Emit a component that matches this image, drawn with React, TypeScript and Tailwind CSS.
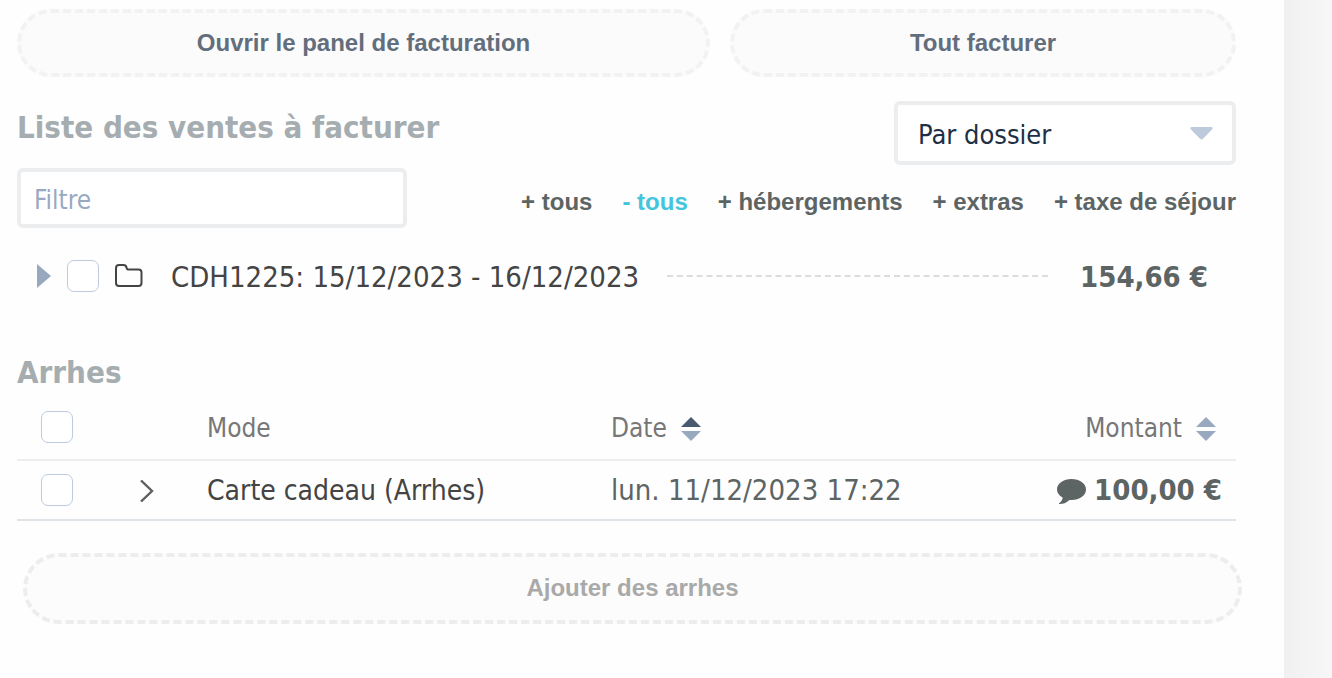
import { useState } from "react";

const tahoma = "font-['Tahoma','DejaVu_Sans_Condensed','Noto_Sans',sans-serif]";
const checkbox =
  "block size-8 shrink-0 appearance-none rounded-[7px] border border-[#bccbde] bg-white checked:bg-[#45c4dd]";
const dashed = "rounded-full border-4 border-dashed px-6 text-2xl font-bold font-['Liberation_Sans',Arial,sans-serif]";

type SortProps = { active?: boolean };

function SortIcon({ active }: SortProps) {
  return (
    <svg width="20" height="24" viewBox="0 0 20 24" aria-hidden="true">
      <path d="M10 0 20 10H0Z" fill={active ? "#475a6e" : "#98a9bf"} />
      <path d="M0 14H20L10 24Z" fill="#98a9bf" />
    </svg>
  );
}

const filters = ["+ tous", "- tous", "+ hébergements", "+ extras", "+ taxe de séjour"];

export default function App() {
  const [selected, setSelected] = useState("- tous");

  return (
    <div className={`flex min-h-screen bg-[#fefefe] ${tahoma}`}>
      <main className="min-w-0 flex-1 pt-[9px] pr-12 pb-[54px] pl-[17px]">
        <div className="flex gap-5">
          <button className={`${dashed} h-[68px] flex-auto border-[#f2f2f2] bg-[#fbfbfb] text-[#626e7b]`}>
            Ouvrir le panel de facturation
          </button>
          <button className={`${dashed} h-[68px] flex-auto border-[#f2f2f2] bg-[#fbfbfb] text-[#626e7b]`}>
            Tout facturer
          </button>
        </div>

        <div className="mt-6 flex items-start justify-between">
          <h2 className="pt-1 text-[31px] leading-[44px] font-bold text-[#a5adb0]">Liste des ventes à facturer</h2>
          <div className="relative w-[342px]">
            <select
              aria-label="Regroupement"
              className="h-16 w-full appearance-none rounded-md border-4 border-[#ebedef] bg-white px-5 pt-1 text-[27px] text-[#212f45]"
            >
              <option>Par dossier</option>
            </select>
            <svg
              className="pointer-events-none absolute top-[26px] right-[23px]"
              width="23"
              height="13"
              viewBox="0 0 23 13"
              aria-hidden="true"
            >
              <path d="M1.5 0H21.5Q23.5 .5 22 2.5L13 11.8Q11.5 13 10 11.8L1 2.5Q-.5 .5 1.5 0Z" fill="#bccadb" />
            </svg>
          </div>
        </div>

        <div className="mt-[3px] flex items-center justify-between">
          <input
            aria-label="Filtre"
            placeholder="Filtre"
            className="h-[60px] w-[390px] rounded-md border-4 border-[#ebedef] bg-white px-[13px] pt-1 text-[26px] text-[#212f45] placeholder:text-[#98a9c2]"
          />
          <div className="flex gap-[30px] pt-2 font-['Liberation_Sans',Arial,sans-serif] text-2xl font-bold">
            {filters.map((label) => (
              <button
                key={label}
                onClick={() => setSelected(label)}
                className={label === selected ? "text-[#45c4dd]" : "text-[#5c6464]"}
              >
                {label}
              </button>
            ))}
          </div>
        </div>

        <div className="mt-7 flex h-10 items-center pr-7 pl-5">
          <button aria-label="Déplier">
            <svg width="14" height="24" viewBox="0 0 14 24" aria-hidden="true">
              <path d="M0 0 14 12 0 24Z" fill="#98a9bf" />
            </svg>
          </button>
          <input id="dossier" type="checkbox" className={`${checkbox} ml-4`} />
          <svg
            className="ml-4 shrink-0"
            width="28"
            height="24"
            viewBox="1 0 28 24"
            fill="none"
            stroke="#444"
            strokeWidth="2"
            aria-hidden="true"
          >
            <path d="M2 4Q2 1 5 1H9.5Q12 1 12.5 3.5T15 5.5H24.5Q27.5 5.5 27.5 8.5V19Q27.5 22 24.5 22H5Q2 22 2 19Z" />
          </svg>
          <label htmlFor="dossier" className="ml-7 pt-[3px] text-[29px] whitespace-nowrap text-[#444]">
            CDH1225: 15/12/2023 - 16/12/2023
          </label>
          <div className="mr-8 ml-7 flex-1 border-t-2 border-dashed border-[#dcdcdc]" />
          <span className="pt-[3px] text-[29px] font-bold whitespace-nowrap text-[#5c6464]">154,66 €</span>
        </div>

        <h2 className="mt-[54px] text-[31px] leading-[44px] font-bold text-[#a5adb0]">Arrhes</h2>
        <table className="w-full table-fixed text-left">
          <colgroup>
            <col className="w-[122px]" />
            <col className="w-[68px]" />
            <col className="w-[404px]" />
            <col />
            <col className="w-[240px]" />
          </colgroup>
          <thead>
            <tr className="h-[66px] border-b-2 border-[#ededee] text-[26px] text-[#777]">
              <th className="pl-6">
                <input aria-label="Tout sélectionner" type="checkbox" className={checkbox} />
              </th>
              <th />
              <th className="pt-1 font-normal">Mode</th>
              <th className="pt-1 font-normal">
                <button className="flex items-center gap-[14px]">
                  Date <SortIcon active />
                </button>
              </th>
              <th className="pt-1 pr-5 font-normal">
                <button className="ml-auto flex items-center gap-[14px]">
                  Montant <SortIcon />
                </button>
              </th>
            </tr>
          </thead>
          <tbody>
            <tr className="h-[60px] border-b-2 border-[#dfe4e9] text-[29px]">
              <td className="pl-6">
                <input aria-label="Carte cadeau (Arrhes)" type="checkbox" className={checkbox} />
              </td>
              <td>
                <button aria-label="Détails" className="block pt-[2px]">
                  <svg width="16" height="22" viewBox="0 0 16 22" fill="none" stroke="#5f5f5f" strokeWidth="2.4" aria-hidden="true">
                    <path d="M2 .5 13 11 2 21.5" />
                  </svg>
                </button>
              </td>
              <td className="pt-[2px] text-[28px] text-[#444]">Carte cadeau (Arrhes)</td>
              <td className="pt-[2px] text-[#5c6464]">lun. 11/12/2023 17:22</td>
              <td className="pt-[2px] pr-[14px] font-bold text-[#5c6464]">
                <div className="flex items-center justify-end gap-2 whitespace-nowrap">
                  <svg width="29" height="25" viewBox="0 0 29 25" fill="currentColor" aria-hidden="true">
                    <path d="M14.5 0C22.5 0 29 4.6 29 10.5S22.5 21 14.5 21L12.5 20.9C9.5 23.8 6 25 2.5 25 1.7 25 1.7 24.3 2.5 23.9 4.5 22.6 5.6 20.8 5.6 18.6 2.2 16.7 0 13.8 0 10.5 0 4.6 6.5 0 14.5 0Z" />
                  </svg>
                  100,00 €
                </div>
              </td>
            </tr>
          </tbody>
        </table>

        <div className="-mr-[6px] ml-[6px] pt-8">
          <button className={`${dashed} h-[71px] w-full border-[#ededed] bg-[#fcfcfc] pb-[2px] text-[#a9a9a9]`}>
            Ajouter des arrhes
          </button>
        </div>
      </main>
      <aside className="w-12 shrink-0 bg-linear-to-r from-[#f0f0f0] to-[#f7f7f7]" />
    </div>
  );
}
